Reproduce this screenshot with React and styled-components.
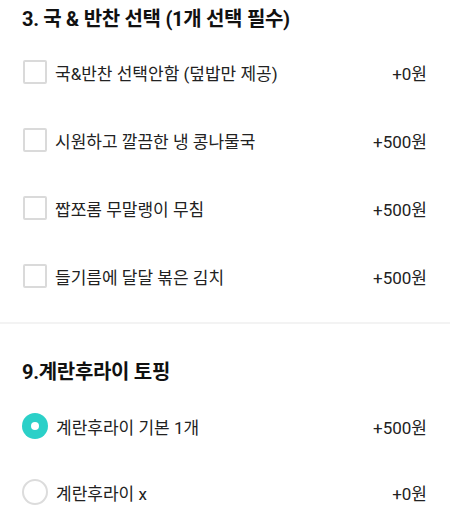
import React from "react";
import styled, { createGlobalStyle } from "styled-components";

const GlobalStyle = createGlobalStyle`
  html, body {
    margin: 0;
    padding: 0;
    background: #fff;
  }
  body {
    font-family: Roboto, "Noto Sans CJK KR", sans-serif;
    color: #222;
  }
`;

const Page = styled.div`
  width: 450px;
  height: 506px;
  overflow: hidden;
  background: #fff;
`;

const Section = styled.section`
  padding: ${(p) => p.$top}px 23px 12px 22px;
`;

const Divider = styled.div`
  height: 2px;
  background: #f3f3f3;
`;

const Title = styled.h2`
  margin: 0 0 ${(p) => p.$gap}px;
  font-size: 20px;
  line-height: 28px;
  font-weight: 700;
  color: #111;
  letter-spacing: -0.3px;
`;

const Row = styled.label`
  display: flex;
  align-items: center;
  height: ${(p) => p.$h}px;
`;

const Check = styled.span`
  width: 20px;
  height: 20px;
  border: 2px solid #dadada;
  border-radius: 2px;
  flex-shrink: 0;
  margin-left: 1px;
`;

const Radio = styled.span`
  width: 26px;
  height: 26px;
  border-radius: 50%;
  flex-shrink: 0;
  box-sizing: border-box;
  display: flex;
  align-items: center;
  justify-content: center;
  background: ${(p) => (p.$on ? "#2bd0c8" : "#fff")};
  border: ${(p) => (p.$on ? "none" : "2px solid #dcdcdc")};

  &::after {
    content: "";
    display: ${(p) => (p.$on ? "block" : "none")};
    width: 8px;
    height: 8px;
    border-radius: 50%;
    background: #fff;
  }
`;

const Name = styled.span`
  flex: 1;
  margin-left: ${(p) => p.$gap}px;
  font-size: 17px;
  color: #222;
`;

const Price = styled.span`
  font-size: 17px;
  color: #222;
`;

const sides = [
  { name: "국&반찬 선택안함 (덮밥만 제공)", price: "+0원" },
  { name: "시원하고 깔끔한 냉 콩나물국", price: "+500원" },
  { name: "짭쪼롬 무말랭이 무침", price: "+500원" },
  { name: "들기름에 달달 볶은 김치", price: "+500원" },
];

const eggs = [
  { name: "계란후라이 기본 1개", price: "+500원", on: true },
  { name: "계란후라이 x", price: "+0원", on: false },
];

export default function App() {
  return (
    <Page>
      <GlobalStyle />
      <Section $top={5}>
        <Title $gap={5}>3. 국 &amp; 반찬 선택 (1개 선택 필수)</Title>
        {sides.map((s) => (
          <Row key={s.name} $h={68}>
            <Check />
            <Name $gap={8}>{s.name}</Name>
            <Price>{s.price}</Price>
          </Row>
        ))}
      </Section>
      <Divider />
      <Section $top={34}>
        <Title $gap={7}>9.계란후라이 토핑</Title>
        {eggs.map((e) => (
          <Row key={e.name} $h={66}>
            <Radio $on={e.on} />
            <Name $gap={8}>{e.name}</Name>
            <Price>{e.price}</Price>
          </Row>
        ))}
      </Section>
    </Page>
  );
}
